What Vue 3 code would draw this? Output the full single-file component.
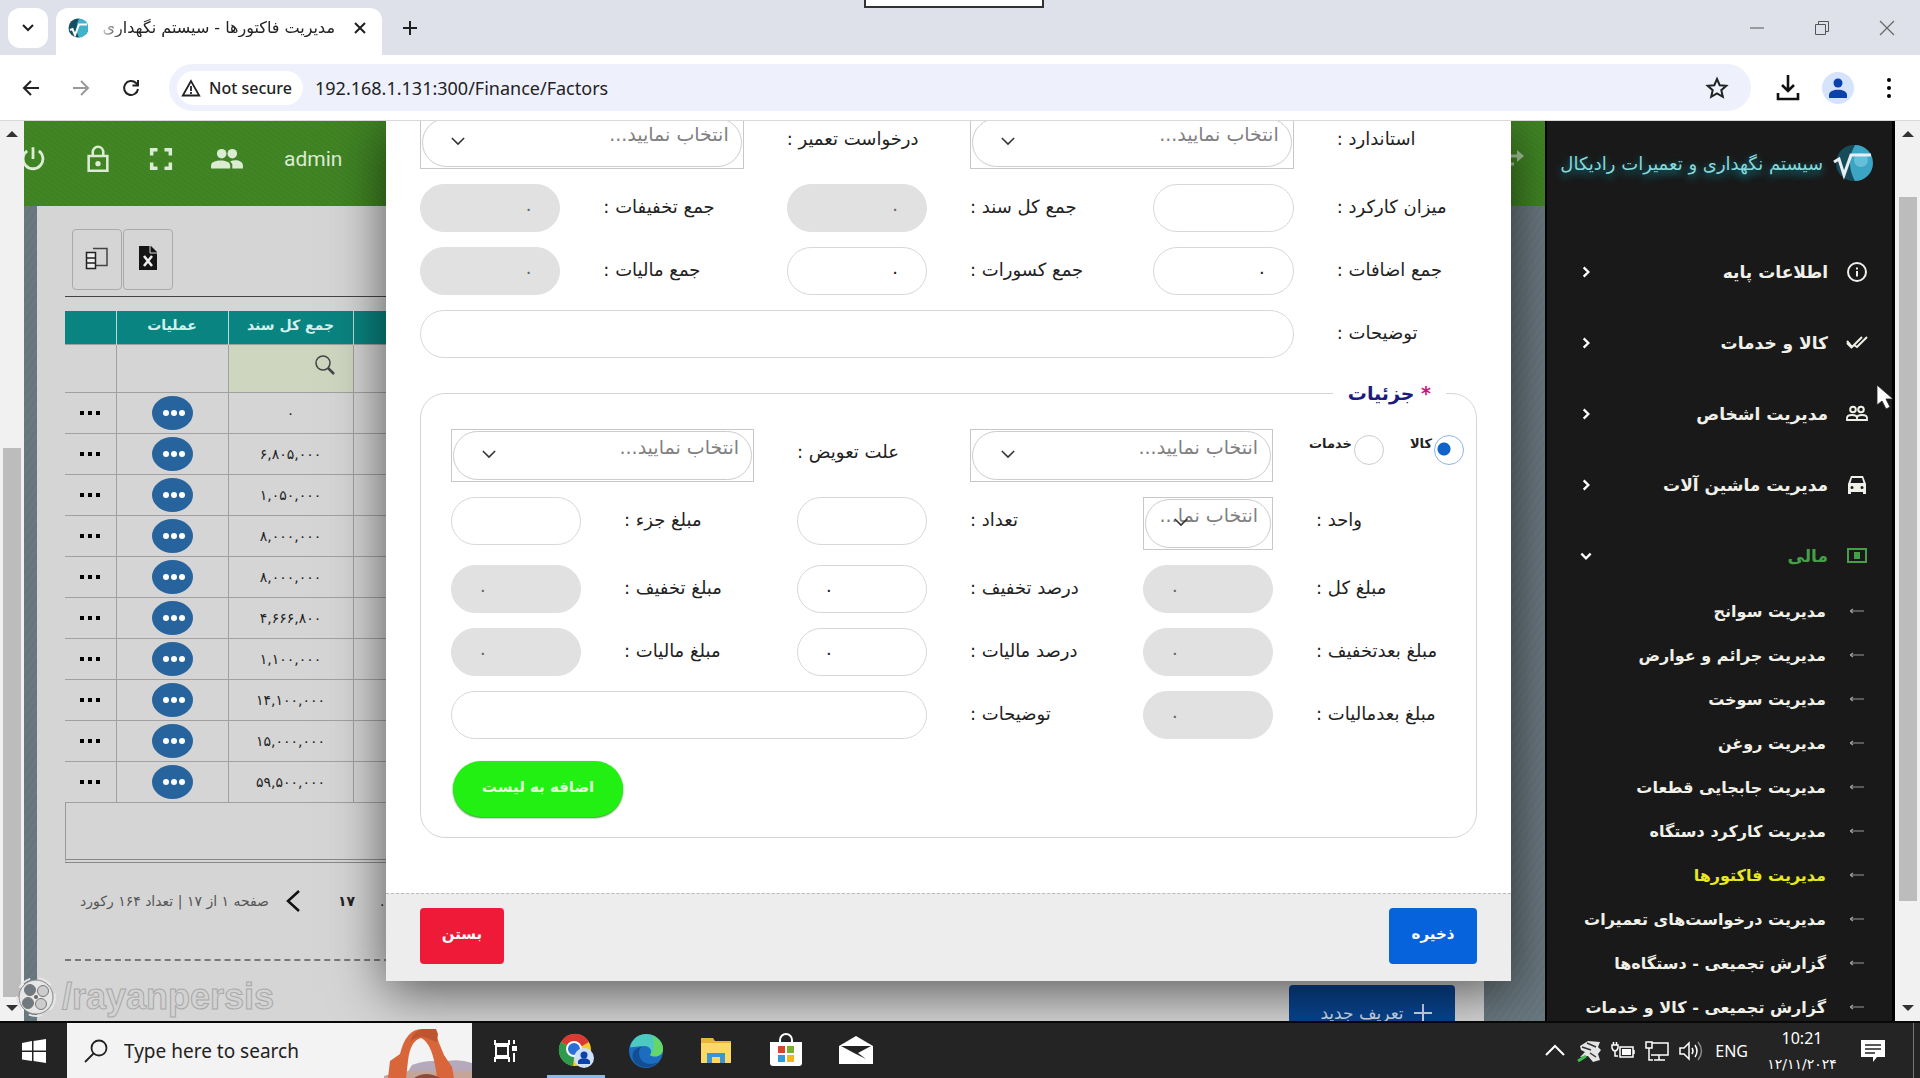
<script setup>
import { ref } from 'vue'

const kind = ref('goods')

const rows = [
  '۰', '۶,۸۰۵,۰۰۰', '۱,۰۵۰,۰۰۰', '۸,۰۰۰,۰۰۰', '۸,۰۰۰,۰۰۰',
  '۴,۶۶۶,۸۰۰', '۱,۱۰۰,۰۰۰', '۱۴,۱۰۰,۰۰۰', '۱۵,۰۰۰,۰۰۰', '۵۹,۵۰۰,۰۰۰'
]

const choose = 'انتخاب نمایید...'

const headFields = [
  { id: 'standard', label: 'استاندارد :', type: 'select', value: choose },
  { id: 'repair', label: 'درخواست تعمیر :', type: 'select', value: choose },
  { id: 'usage', label: 'میزان کارکرد :', value: '' },
  { id: 'docTotal', label: 'جمع کل سند :', value: '۰', off: true },
  { id: 'discounts', label: 'جمع تخفیفات :', value: '۰', off: true },
  { id: 'additions', label: 'جمع اضافات :', value: '۰' },
  { id: 'deductions', label: 'جمع کسورات :', value: '۰' },
  { id: 'taxes', label: 'جمع مالیات :', value: '۰', off: true },
  { id: 'notes', label: 'توضیحات :', value: '', span: 5 }
]

const detailFields = [
  { id: 'unit', label: 'واحد :', type: 'select', value: 'انتخاب نما...' },
  { id: 'count', label: 'تعداد :', value: '' },
  { id: 'unitPrice', label: 'مبلغ جزء :', value: '' },
  { id: 'total', label: 'مبلغ کل :', value: '۰', off: true },
  { id: 'discountRate', label: 'درصد تخفیف :', value: '۰' },
  { id: 'discount', label: 'مبلغ تخفیف :', value: '۰', off: true },
  { id: 'afterDiscount', label: 'مبلغ بعدتخفیف :', value: '۰', off: true },
  { id: 'taxRate', label: 'درصد مالیات :', value: '۰' },
  { id: 'tax', label: 'مبلغ مالیات :', value: '۰', off: true },
  { id: 'afterTax', label: 'مبلغ بعدمالیات :', value: '۰', off: true },
  { id: 'itemNotes', label: 'توضیحات :', value: '', span: 3 }
]

const menu = [
  { text: 'اطلاعات پایه', icon: 'info' },
  { text: 'کالا و خدمات', icon: 'check' },
  { text: 'مدیریت اشخاص', icon: 'people' },
  { text: 'مدیریت ماشین آلات', icon: 'car' },
  { text: 'مالی', icon: 'money', open: true }
]

const submenu = [
  'مدیریت سوانح', 'مدیریت جرائم و عوارض', 'مدیریت سوخت', 'مدیریت روغن',
  'مدیریت جابجایی قطعات', 'مدیریت کارکرد دستگاه', 'مدیریت فاکتورها',
  'مدیریت درخواست‌های تعمیرات', 'گزارش تجمیعی - دستگاه‌ها', 'گزارش تجمیعی - کالا و خدمات'
]
</script>

<template>
  <div class="screen">
    <header class="tabs">
      <button class="tab-search" aria-label="Search tabs">
        <svg width="12" height="8" viewBox="0 0 12 8"><path d="M1 1l5 5 5-5" fill="none" stroke="#1f1f1f" stroke-width="2" /></svg>
      </button>
      <div class="tab">
        <svg class="favicon" viewBox="0 0 40 40">
          <circle cx="20" cy="20" r="19" fill="#174f61" /><path d="M22 1a19 19 0 0 1 0 38q-10-18 0-38" fill="#3fb3c9" />
          <path d="M4 24l5-2 5 12L22 13h16" fill="none" stroke="#fff" stroke-width="4" />
        </svg>
        <span class="tab-title" dir="rtl">مدیریت فاکتورها - سیستم نگهداری</span>
        <button class="tab-close" aria-label="Close tab">
          <svg width="12" height="12" viewBox="0 0 12 12"><path d="M1 1l10 10M11 1L1 11" stroke="#1f1f1f" stroke-width="2" /></svg>
        </button>
      </div>
      <button class="tab-new" aria-label="New tab">
        <svg width="16" height="16" viewBox="0 0 16 16"><path d="M8 1v14M1 8h14" stroke="#1f1f1f" stroke-width="2" /></svg>
      </button>
      <div class="grip"></div>
      <div class="win">
        <svg width="16" height="16" viewBox="0 0 16 16"><path d="M1 8h14" stroke="#555" /></svg>
        <svg width="16" height="16" viewBox="0 0 16 16"><path d="M1.500 4.500h10v10h-10zM4.500 4.500v-3h10v10h-3" fill="none" stroke="#555" /></svg>
        <svg width="16" height="16" viewBox="0 0 16 16"><path d="M1 1l14 14M15 1L1 15" stroke="#666" stroke-width="1.200" /></svg>
      </div>
    </header>

    <nav class="toolbar">
      <svg width="20" height="20" viewBox="0 0 20 20"><path d="M18 10H3M10 3l-7 7 7 7" fill="none" stroke="#222" stroke-width="2" /></svg>
      <svg width="20" height="20" viewBox="0 0 20 20"><path d="M2 10h15M10 3l7 7-7 7" fill="none" stroke="#999" stroke-width="2" /></svg>
      <svg width="20" height="20" viewBox="0 0 20 20"><path d="M17 11a7 7 0 1 1-2-6l2 2M17 2v5.500h-5.500" fill="none" stroke="#222" stroke-width="2" /></svg>
      <div class="omnibox">
        <span class="chip">
          <svg width="20" height="18" viewBox="0 0 20 18"><path d="M10 2L1.800 16.500h16.400zM10 7v5M10 13v2" fill="none" stroke="#222" stroke-width="1.800" /></svg>
          Not secure
        </span>
        <input class="url" value="192.168.1.131:300/Finance/Factors" aria-label="Address" />
        <svg width="24" height="24" viewBox="0 0 24 24"><path d="M12 3l2.700 6.200 6.600.6-5 4.400 1.500 6.600L12 17.300l-5.800 3.500 1.500-6.600-5-4.400 6.600-.6z" fill="none" stroke="#222" stroke-width="2" /></svg>
      </div>
      <svg class="dl" width="24" height="28" viewBox="0 0 24 28"><path d="M12 1v16M6 11l6 6 6-6M2 19v6h20v-6" fill="none" stroke="#111" stroke-width="2.600" /></svg>
      <span class="avatar"><svg width="20" height="22" viewBox="0 0 20 22"><circle cx="10" cy="6" r="4.500" fill="#0b41a8" /><path d="M1 21v-3c0-7 18-7 18 0v3z" fill="#0b41a8" /></svg></span>
      <svg width="6" height="22" viewBox="0 0 6 22"><circle cx="3" cy="3" r="2" /><circle cx="3" cy="11" r="2" /><circle cx="3" cy="19" r="2" /></svg>
    </nav>

    <div class="viewport">
      <div class="scroll left">
        <i class="up"></i><b></b><i class="down"></i>
      </div>

      <main class="page">
        <div class="topbar">
          <svg viewBox="0 0 24 24"><path d="M12 2v10M7 5a8.500 8.500 0 1 0 10 0" fill="none" stroke="#dcebd4" stroke-width="2.400" /></svg>
          <svg viewBox="0 0 24 24"><path d="M4 9.500h16V22H4zM7.500 9V6a4.500 4.500 0 0 1 9 0v3" fill="none" stroke="#dcebd4" stroke-width="2.200" /><circle cx="12" cy="16" r="2.300" fill="#dcebd4" /></svg>
          <svg viewBox="0 0 24 24"><path d="M4 9V4h5M15 4h5v5M20 15v5h-5M9 20H4v-5" fill="none" stroke="#dcebd4" stroke-width="3" /></svg>
          <svg class="wide" viewBox="0 0 32 24"><g fill="#dcebd4"><circle cx="11" cy="7" r="4.500" /><circle cx="21" cy="7" r="4.500" /><path d="M1 21v-3c0-6 18-6 18 0v3zM21 21v-4l-2-3c6-2 12 0 12 4v3z" /></g></svg>
          <span>admin</span>
          <svg class="swap" viewBox="0 0 24 24"><path d="M1 9h18M4 17h9" stroke="#a9c79a" stroke-width="3" /><path d="M16 3l7 6-7 6z" fill="#a9c79a" /></svg>
        </div>

        <section class="panel">
          <div class="tools">
            <button aria-label="Columns"><svg width="24" height="24" viewBox="0 0 24 24"><path d="M8 2.500h14v17h-11" fill="none" stroke="#444" stroke-width="1.500" /><path d="M1.500 6.500h9v16h-9zM1.500 12h9M1.500 17h9" fill="#eee" stroke="#222" stroke-width="1.500" /></svg></button>
            <button aria-label="Excel"><svg width="24" height="24" viewBox="0 0 24 24"><path d="M3 0h12l6 6v18H3z" fill="#151515" /><path d="M14 0v7h7" fill="none" stroke="#ddd" /><path d="M8 10l8 10M16 10L8 20" stroke="#eee" stroke-width="2.600" /></svg></button>
          </div>
          <table>
            <thead>
              <tr><th class="c1"></th><th class="c2">عملیات</th><th class="c3">جمع کل سند</th><th></th></tr>
            </thead>
            <tbody>
              <tr class="filter">
                <td></td><td></td>
                <td class="search"><svg width="20" height="20" viewBox="0 0 20 20"><circle cx="8" cy="8" r="7" fill="none" stroke="#444" stroke-width="1.500" /><path d="M13 13l6 6" stroke="#444" stroke-width="2.500" /></svg></td>
                <td></td>
              </tr>
              <tr v-for="(r, i) in rows" :key="i">
                <td><svg width="22" height="6" viewBox="0 0 22 6"><path d="M1 1h4v4h-4zM9 1h4v4h-4zM17 1h4v4h-4z" /></svg></td>
                <td><button class="more" aria-label="More"><svg width="24" height="8" viewBox="0 0 24 8"><g fill="#fff"><circle cx="4" cy="4" r="3" /><circle cx="12" cy="4" r="3" /><circle cx="20" cy="4" r="3" /></g></svg></button></td>
                <td>{{ r }}</td>
                <td></td>
              </tr>
            </tbody>
          </table>
          <div class="tablefoot"></div>
          <div class="pager">
            <span class="count" dir="rtl">صفحه ۱ از ۱۷ | تعداد ۱۶۴ رکورد</span>
            <svg width="14" height="22" viewBox="0 0 14 22"><path d="M13 1L2 11l11 10" fill="none" stroke="#111" stroke-width="2.500" /></svg>
            <b>۱۷</b><span class="dots">.</span>
          </div>
          <div class="addrow">
            <button class="add" dir="rtl"><svg width="18" height="18" viewBox="0 0 18 18"><path d="M9 0v18M0 9h18" stroke="#cfdcf0" stroke-width="2" /></svg>تعریف جدید</button>
          </div>
        </section>

        <form class="modal" dir="rtl" @submit.prevent>
          <div class="body">
            <div class="grid">
              <template v-for="f in headFields" :key="f.id">
                <label :for="f.id">{{ f.label }}</label>
                <div v-if="f.type" class="pick s2">
                  <select :id="f.id"><option>{{ f.value }}</option></select>
                  <svg viewBox="0 0 16 10"><path d="M1 1l7 7 7-7" fill="none" stroke="#333" stroke-width="1.800" /></svg>
                </div>
                <input v-else :id="f.id" :class="{ s5: f.span === 5 }" :value="f.value" :disabled="f.off" />
              </template>
            </div>

            <fieldset>
              <legend><em>*</em> جزئیات</legend>
              <div class="grid">
                <div class="radios">
                  <label><input v-model="kind" type="radio" value="goods" />کالا</label>
                  <label><input v-model="kind" type="radio" value="services" />خدمات</label>
                </div>
                <div class="pick s2">
                  <select aria-label="کالا"><option>{{ choose }}</option></select>
                  <svg viewBox="0 0 16 10"><path d="M1 1l7 7 7-7" fill="none" stroke="#333" stroke-width="1.800" /></svg>
                </div>
                <label for="reason">علت تعویض :</label>
                <div class="pick s2">
                  <select id="reason"><option>{{ choose }}</option></select>
                  <svg viewBox="0 0 16 10"><path d="M1 1l7 7 7-7" fill="none" stroke="#333" stroke-width="1.800" /></svg>
                </div>
                <template v-for="f in detailFields" :key="f.id">
                  <label :for="f.id">{{ f.label }}</label>
                  <div v-if="f.type" class="pick">
                    <select :id="f.id"><option>{{ f.value }}</option></select>
                    <svg viewBox="0 0 16 10"><path d="M1 1l7 7 7-7" fill="none" stroke="#333" stroke-width="1.800" /></svg>
                  </div>
                  <input v-else :id="f.id" class="ltr" :class="{ s3: f.span === 3 }" :value="f.value" :disabled="f.off" />
                </template>
              </div>
              <button class="append" type="button">اضافه به لیست</button>
            </fieldset>
          </div>
          <footer>
            <button class="save">ذخیره</button>
            <button class="close" type="button">بستن</button>
          </footer>
        </form>
      </main>

      <aside class="side" dir="rtl">
        <div class="brand">
          <svg width="40" height="40" viewBox="0 0 40 40">
            <circle cx="21" cy="20" r="18" fill="#164b5c" /><path d="M22 2a18 18 0 0 1 0 36q-10-18 0-36" fill="#3ba6c4" /><circle cx="28" cy="17" r="7" fill="#63c0d8" />
            <path d="M1 19l5-3 5 16L18 12h20" fill="none" stroke="#e6eef2" stroke-width="3" />
          </svg>
          <span>سیستم نگهداری و تعمیرات رادیکال</span>
        </div>
        <a v-for="m in menu" :key="m.text" href="#" class="item" :class="{ open: m.open }">
          <svg class="ico" viewBox="0 0 22 22" fill="none" stroke="currentColor" stroke-width="2">
            <template v-if="m.icon === 'info'"><circle cx="11" cy="11" r="9" /><path d="M11 10v5.500M11 6.500v2" /></template>
            <path v-else-if="m.icon === 'check'" d="M1 9l5 6 10-10M8 13l3 2L21 5M1 11l5 5" />
            <template v-else-if="m.icon === 'people'"><circle cx="7" cy="6.500" r="2.800" /><circle cx="15" cy="6.500" r="2.800" /><path d="M1 17v-2c0-4 10-4 10 0v2zM11 17h10v-2c0-4-10-4-10 0z" stroke-width="1.800" /></template>
            <path v-else-if="m.icon === 'car'" fill="currentColor" stroke="none" fill-rule="evenodd" d="M5 2h12l3 8v10h-3v-2H5v2H2V10zM6 4L4.500 9h13L16 4zM6 12a1.500 1.500 0 1 0 0 3 1.500 1.500 0 0 0 0-3zM16 12a1.500 1.500 0 1 0 0 3 1.500 1.500 0 0 0 0-3z" />
            <template v-else><path d="M2 4h18v13H2z" /><path d="M8 7h6v7H8z" fill="currentColor" stroke="none" /></template>
          </svg>
          <span>{{ m.text }}</span>
          <svg class="arr" viewBox="0 0 12 12"><path :d="m.open ? 'M2 4l4 4 4-4' : 'M4 2l4 4-4 4'" fill="none" stroke="#fff" stroke-width="2" /></svg>
        </a>
        <nav class="subs">
          <a v-for="(s, i) in submenu" :key="s" href="#" class="sub" :class="{ current: i === 6 }">
            <svg width="14" height="8" viewBox="0 0 14 8"><path d="M0 4h14M3 2L0 4l3 2" fill="none" stroke="#999" stroke-width="1.200" /></svg>
            <span>{{ s }}</span>
          </a>
        </nav>
      </aside>

      <div class="scroll right">
        <i class="up"></i><b></b><i class="down"></i>
      </div>

      <div class="watermark">
        <svg width="40" height="40" viewBox="0 0 40 40"><circle cx="20" cy="20" r="17" fill="#e6e6e6" stroke="#888" /><circle cx="20" cy="20" r="19" fill="none" stroke="#e6e6e6" stroke-width="2" stroke-dasharray="14 9" /><g stroke="#777"><circle cx="14" cy="13" r="5.500" fill="#6f7a80" /><circle cx="27" cy="14" r="5.500" fill="#ccc" /><circle cx="12" cy="26" r="5.500" fill="#6f7a80" /><circle cx="25" cy="27" r="5.500" fill="#ccc" /></g><circle cx="20" cy="20" r="2" fill="#666" /></svg>
        <span>/rayanpersis</span>
      </div>
      <svg class="cursor" width="18" height="26" viewBox="0 0 18 26"><path d="M1 1v20l5-4 4 8 4-2-4-8h7z" fill="#fff" stroke="#222" stroke-width=".8" /></svg>
    </div>

    <footer class="taskbar">
      <button class="start" aria-label="Start"><svg width="24" height="24" viewBox="0 0 24 24"><path d="M0 4l10-2v9.500H0zM11.500 2L24 0v11.500H11.500zM0 13h10v9L0 20.500zM11.500 13H24v11l-12.500-2z" fill="#fff" /></svg></button>
      <label class="find">
        <svg width="24" height="24" viewBox="0 0 24 24"><circle cx="15" cy="9" r="7.500" fill="none" stroke="#222" stroke-width="1.800" /><path d="M9.500 14.500L1 23" stroke="#222" stroke-width="1.800" /></svg>
        <input placeholder="Type here to search" />
        <svg class="arch" width="88" height="55" viewBox="0 0 88 55">
          <path d="M28 42q16-6 30-3 16-4 30 1v15H20z" fill="#b5a9bb" /><path d="M0 53q15-5 30-5h58v7H0z" fill="#c4a597" />
          <path d="M4 55l2-17 10-7Q22 6 38 6q13 0 17 14l5 12 8 12 2 11H53Q49 20 37 15 26 18 24 38l-2 17z" fill="#d9663a" />
          <path d="M38 6h14l2 5-1 8-8-3q-7-4-12-1-6 1-7 6Q28 8 38 6z" fill="#bd5530" /><path d="M30 55q12-8 26 0z" fill="#8d4a3b" />
        </svg>
      </label>
      <div class="apps">
        <span><svg viewBox="0 0 36 36" fill="none" stroke="#fff" stroke-width="2"><path d="M7 7v4h14V7M7 29v-4h14v4M8 13h12v10H8zM26 7v4M26 20v9" /><path d="M24 13h5v5h-5z" fill="#fff" stroke="none" /></svg></span>
        <span class="active"><svg viewBox="0 0 36 36"><circle cx="17" cy="17" r="16" fill="#f8c92f" /><path d="M17 17L3 9a16 16 0 0 1 28 0z" fill="#d93a34" /><path d="M17 17L3 9a16 16 0 0 0 12 24z" fill="#2f9a4b" /><circle cx="16" cy="16" r="7" fill="#2b6fd8" stroke="#fff" stroke-width="2" /><circle cx="26" cy="25" r="10" fill="#cfe0fb" /><circle cx="26" cy="22" r="3.500" fill="#0b41a8" /><path d="M20 31v-2c0-5 12-5 12 0v2z" fill="#0b41a8" /></svg></span>
        <span><svg viewBox="0 0 36 36"><circle cx="18" cy="18" r="17" fill="#1c6dc0" /><path d="M2 14C5 4 12 1 18 1c9 0 17 6 17 15 0 8-9 9-13 6 3-4 0-9-6-9-7 0-12 2-14 1z" fill="#4cc9c0" /><path d="M24 3c7 3 11 7 11 13 0 7-9 9-13 6 5-5 5-11 2-19z" fill="#66d766" /><path d="M11 20c0 9 9 14 19 9-6 8-21 7-25-3-2-7 3-12 9-12-2 1-3 3-3 6z" fill="#134d92" /></svg></span>
        <span><svg viewBox="0 0 36 36"><path d="M3 5h12l2 3h16v22H3z" fill="#e8b53a" /><path d="M3 10h30v20H3z" fill="#fbd868" /><path d="M9 20h18v10h-5v-6h-8v6H9z" fill="#3d94d3" /></svg></span>
        <span><svg viewBox="0 0 36 36"><path d="M12 10V7a6 6 0 0 1 12 0v3" fill="none" stroke="#fff" stroke-width="2" /><path d="M2 9h32v21q0 3-3 3H5q-3 0-3-3z" fill="#fff" /><path d="M10 13h7v7h-7z" fill="#d8432b" /><path d="M19 13h7v7h-7z" fill="#7cb02c" /><path d="M10 22h7v7h-7z" fill="#2f9bd8" /><path d="M19 22h7v7h-7z" fill="#f2b526" /></svg></span>
        <span><svg viewBox="0 0 36 36"><path d="M1 13L18 3l17 10v18H1z" fill="#fff" /><path d="M3 13h30L20 20l8 6-12-6z" fill="#222" /></svg></span>
      </div>
      <div class="tray">
        <svg viewBox="0 0 24 24"><path d="M3 16l9-9 9 9" fill="none" stroke="#fff" stroke-width="2" /></svg>
        <svg viewBox="0 0 24 24"><path d="M3 7l8-5 12 1-2 5 3 3-3 4 2 6-7 2-5-6-8 1 5-5-4-2z" fill="#e4e4e4" /><path d="M5 8l9 3M10 4l9 4M13 14l6 4" stroke="#333" stroke-width="1.500" /><path d="M1 22l8-5" stroke="#3fc054" stroke-width="3" /></svg>
        <svg viewBox="0 0 24 24"><path d="M9 8h13v10H9zM23 11v4M1 6h6v3q-1 3-3 3T1 9zM2.500 3v3M5.500 3v3M4 12v5h3" fill="none" stroke="#fff" stroke-width="1.500" /><path d="M11 10h9v6h-9z" fill="#fff" /></svg>
        <svg viewBox="0 0 24 24"><path d="M7 4h16v12H6M14 16v5M9 21h11M1 3h6v6H1zM4 9v12h4" fill="none" stroke="#fff" stroke-width="1.500" /></svg>
        <svg viewBox="0 0 24 24" fill="none" stroke="#fff" stroke-width="1.500"><path d="M1 9h4l5-5v16l-5-5H1zM13 9q2 3 0 6M16 6q4 6 0 12" /><path d="M19 3q7 9 0 18" stroke="#888" /></svg>
        <span class="lang">ENG</span>
        <span class="clock"><span>10:21</span><span class="date">۱۲/۱۱/۲۰۲۴</span></span>
        <svg class="note" viewBox="0 0 24 24"><path d="M0 1h24v17h-8l-4 5v-5H0z" fill="#fff" /><path d="M4 6h16M4 10h16M4 14h10" stroke="#222" stroke-width="1.600" /></svg>
      </div>
      <div class="peek"></div>
    </footer>
  </div>
</template>

<style>
html, body { margin: 0; overflow: hidden; }
</style>

<style scoped>
* { box-sizing: border-box; }
button, input, select { font: inherit; color: inherit; margin: 0; }
button { border: 0; padding: 0; cursor: pointer; }
a { text-decoration: none; color: inherit; }
svg { display: block; flex: none; }
.screen { display: flex; flex-direction: column; height: 100vh; font-family: "DejaVu Sans", sans-serif; color: #222; background: #fff; }

.tabs { display: flex; align-items: center; height: 55px; background: #dee1ea; padding-left: 8px; position: relative; flex: none; }
.tab-search { width: 40px; height: 40px; border-radius: 12px; background: #fff; display: grid; place-items: center; }
.tab { display: flex; align-items: center; align-self: flex-end; width: 326px; height: 47px; margin-left: 8px; padding: 0 16px 8px 12px; background: #fff; border-radius: 12px 12px 0 0; }
.favicon { width: 20px; height: 20px; }
.tab-title { flex: 1; min-width: 0; margin: 0 19px 0 8px; font-size: 16px; white-space: nowrap; mask-image: linear-gradient(90deg, transparent, #000 28px); }
.tab-close, .tab-new { background: none; }
.tab-new { margin-left: 20px; }
.grip { position: absolute; left: 45%; top: 0; width: 180px; height: 8px; background: #fff; border: 2px solid #333; border-top: 0; }
.win { margin-left: auto; display: flex; gap: 49px; padding-right: 25px; }

.toolbar { display: flex; align-items: center; height: 66px; flex: none; padding: 0 28px 0 21px; background: #fff; border-bottom: 1px solid #d9d9d9; }
.toolbar > svg + svg { margin-left: 30px; }
.omnibox { flex: 1; display: flex; align-items: center; height: 47px; margin-left: 28px; border-radius: 24px; background: #eef1fc; padding: 0 22px 0 8px; font-family: "Noto Sans", sans-serif; }
.chip { display: flex; align-items: center; gap: 8px; height: 34px; width: 126px; padding-left: 4px; border-radius: 17px; background: #fff; font-size: 16px; font-weight: 500; white-space: nowrap; }
.url { flex: 1; border: 0; background: none; font-size: 18px; padding: 0 12px; outline: 0; }
.toolbar .dl { margin-left: 25px; }
.avatar { width: 32px; height: 32px; margin: 0 32px 0 22px; border-radius: 50%; background: #d5e3fc; display: grid; place-items: center; }

.viewport { flex: 1; min-height: 0; display: flex; position: relative; overflow: hidden; }
.scroll { width: 24px; flex: none; display: flex; flex-direction: column; align-items: center; background: #f1f1f1; }
.scroll b { width: 18px; background: #bcbcbc; }
.scroll i { border: 6px solid transparent; }
.scroll .up { border-bottom-color: #333; margin-top: 4px; }
.scroll .down { border-top-color: #333; margin-bottom: 4px; margin-top: auto; }
.left b { margin-top: 311px; flex: 0 1 549px; }
.right { width: 25px; }
.right b { margin-top: 60px; flex: 0 1 704px; }

.page { flex: 1; min-width: 0; position: relative; display: flex; flex-direction: column; overflow: hidden; background: repeating-linear-gradient(125deg, #67757d 0 3px, #6a787f 3px 6px); }
.topbar { display: flex; align-items: center; height: 85px; flex: none; padding-bottom: 10px; background: repeating-linear-gradient(35deg, #3e8222 0 2px, #428526 2px 4px); color: #dcebd4; font: 21px Roboto, sans-serif; }
.topbar svg { width: 28px; height: 28px; margin-right: 35px; }
.topbar svg:first-child { margin-left: -5px; margin-right: 37px; }
.topbar .wide { width: 34px; margin-right: 40px; }
.topbar .swap { width: 24px; margin-left: auto; margin-right: 20px; }

.panel { flex: 1; margin: 0 61px 0 13px; padding: 23px 27px 0 28px; background: #d5d5d5; }
.tools { display: flex; gap: 1px; padding: 0 7px 6px; border-bottom: 1px solid #444; }
.tools button { width: 50px; height: 61px; border: 1px solid #aaa; border-radius: 4px; background: none; display: grid; place-items: center; padding-bottom: 4px; }
table { width: 100%; margin-top: 14px; border-collapse: collapse; table-layout: fixed; text-align: center; font-size: 14px; }
th { height: 33px; padding: 0 0 4px; background: #0a8480; color: #d3f0ee; border-left: 1px solid #b9dcda; font-size: 14px; }
th:first-child { border-left: 0; }
.c1 { width: 51px; }
.c2 { width: 112px; }
.c3 { width: 125px; }
td { height: 41px; padding: 0; border: 1px solid #a0a0a0; border-left-color: #8a8a8a; }
td:first-child { border-left: 0; }
td > svg { margin: auto; }
.filter td { height: 48px; }
.filter .search { background: #cfd6c0; }
.filter .search svg { margin: -6px 18px 0 auto; }
.more { display: grid; place-items: center; width: 41px; height: 34px; margin: auto; border-radius: 50%; background: #27639c; padding-left: 4px; }
.tablefoot { height: 60px; border: 1px solid #999; border-top: 0; border-bottom: 4px double #888; }
.pager { display: flex; align-items: center; height: 76px; padding-left: 12px; font-size: 14px; }
.count { color: #555; width: 192px; white-space: nowrap; }
.pager svg { margin: 0 38px 0 17px; }
.pager b { width: 16px; }
.dots { margin-left: 26px; }
.addrow { margin-top: 20px; padding: 24px 2px 0; border-top: 2px dashed #777; display: flex; justify-content: flex-end; }
.add { display: flex; align-items: center; justify-content: center; gap: 10px; width: 166px; height: 56px; padding-left: 8px; border-radius: 4px; background: #08448f; color: #cfdcf0; font-size: 17px; }

.modal { position: absolute; top: 0; left: 362px; right: 34px; background: #fff; box-shadow: 0 10px 50px rgba(0, 0, 0, .6); font-size: 18px; }
.body { padding: 0 34px; margin-top: -5px; }
.grid { display: grid; grid-template-columns: repeat(6, minmax(0, 1fr)); gap: 15px 43px; }
.grid label { text-align: left; align-self: start; line-height: 46px; white-space: nowrap; justify-self: end; }
.grid input:not([type=radio]) { width: 100%; height: 48px; border: 1px solid #d8d8d8; border-radius: 24px; padding: 0 26px; font-size: 18px; background: #fff; min-width: 0; }
.grid input:disabled { background: #e1e1e1; color: #666; border-color: #e1e1e1; }
.grid .ltr { direction: ltr; }
.pick { position: relative; height: 53px; border: 1px solid #c8c8c8; padding: 1px; }
.pick select { appearance: none; width: 100%; height: 100%; border: 1px solid #ccc; border-radius: 25px; background: #fff; color: #808080; padding: 0 12px 18px; font-size: 19px; outline: 0; }
.pick svg { position: absolute; left: 30px; bottom: 22px; width: 14px; height: 9px; }
.s2 { grid-column: span 2; }
.s3 { grid-column: span 3; }
.s5 { grid-column: span 5; }
fieldset { margin: 20px 0 0; padding: 21px 30px 20px; border: 1px solid #d5d5d5; border-radius: 25px; min-width: 0; }
legend { padding: 0 15px; color: #1b1b80; font-size: 19px; font-weight: bold; line-height: 30px; }
legend em { color: #d1127c; font-style: normal; }
.radios { display: flex; gap: 26px; margin-right: -18px; }
.radios label { display: flex; gap: 2px; font-size: 13px; font-weight: bold; line-height: 30px; }
.radios input { appearance: none; width: 30px; height: 30px; margin-top: 6px; border: 1px solid #ccc; border-radius: 50%; background: #fff; flex: none; }
.radios input:checked { border-color: #8fb4dd; background: radial-gradient(circle at 9px 13px, #0f63c9 6px, transparent 7px); }
.append { display: block; width: 170px; height: 56px; margin: 22px auto 0 2px; border-radius: 28px; background: #22f012; color: #dfffd9; font-size: 15px; font-weight: bold; padding-bottom: 5px; box-shadow: 0 1px 2px #2a8a20; }
.modal footer { display: flex; justify-content: space-between; margin-top: 55px; padding: 14px 34px 17px; background: #ededed; border-top: 1px dashed #bbb; }
.save, .close { height: 56px; border-radius: 4px; color: #fff; font-size: 15px; font-weight: bold; padding-bottom: 5px; }
.save { width: 88px; background: #0763dc; }
.close { width: 84px; background: #ee1a38; }

.side { width: 350px; flex: none; background: #191919; border: solid #000; border-width: 0 3px 0 2px; color: #f0f0e8; overflow: hidden; }
.brand { display: flex; align-items: center; gap: 10px; height: 84px; margin-bottom: 31px; padding-right: 19px; color: #86d8dc; font-size: 18px; white-space: nowrap; text-shadow: 0 3px 8px #1496a8; }
.item { display: flex; align-items: center; gap: 18px; height: 71px; padding: 0 24px 0 32px; font-size: 17px; font-weight: bold; }
.item .ico { width: 22px; height: 22px; }
.item .arr { width: 14px; height: 14px; margin-right: auto; }
.open { color: #43a047; }
.subs { margin-top: -2px; }
.sub { display: flex; align-items: center; gap: 24px; height: 44px; padding-right: 28px; font-size: 16px; font-weight: bold; white-space: nowrap; }
.current { color: #e8e820; }

.watermark { position: absolute; left: 16px; bottom: 3px; display: flex; align-items: center; gap: 6px; font: bold 36px "Liberation Sans", sans-serif; color: #d2d2d2; -webkit-text-stroke: 1px #a8a8a8; }
.cursor { position: absolute; right: 26px; top: 263px; }

.taskbar { display: flex; align-items: stretch; height: 57px; flex: none; background: #242424; border-top: 2px solid #080808; color: #fff; font-family: "Noto Sans", sans-serif; }
.start { width: 67px; background: none; display: grid; place-items: center; }
.find { display: flex; align-items: center; width: 405px; padding-left: 17px; background: #f3f3f3; color: #222; }
.find input { flex: 1; min-width: 0; border: 0; background: none; padding: 0 0 0 16px; font-size: 19px; outline: 0; }
.find input::placeholder { color: #222; opacity: 1; }
.apps { display: flex; align-items: stretch; padding-left: 5px; gap: 12px; }
.apps span { width: 58px; display: grid; place-items: center; padding-top: 3px; border-bottom: 3px solid transparent; }
.apps .active { border-bottom-color: #8fb8e6; }
.apps svg { width: 36px; height: 36px; }
.tray { margin-left: auto; display: flex; align-items: center; gap: 10px; padding-right: 28px; }
.tray svg { width: 24px; height: 24px; }
.lang { font-size: 16px; margin-left: 2px; }
.clock { display: flex; flex-direction: column; align-items: center; width: 72px; margin: 0 13px 0 8px; font-size: 16px; line-height: 26px; white-space: nowrap; }
.date { font-size: 14px; font-family: "DejaVu Sans", sans-serif; }
.peek { width: 7px; margin-left: 0; border-left: 1px solid #777; }
</style>
